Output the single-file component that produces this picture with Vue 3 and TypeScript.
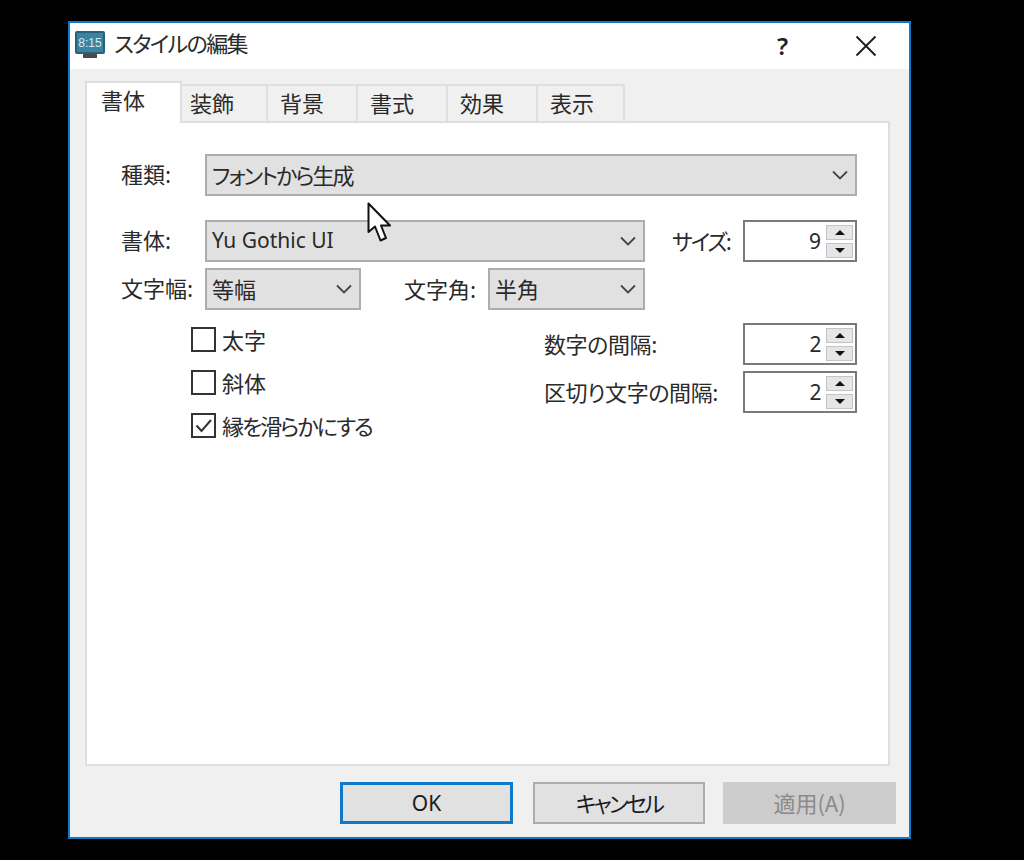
<template>
  <div class="screen">
    <div class="dialog">
      <div class="titlebar">
        <div class="app-icon">
          <div class="app-screen"><span>8:15</span></div>
          <div class="app-stand"></div>
        </div>
        <div class="title">スタイルの編集</div>
        <div class="help">?</div>
        <svg class="close" width="22" height="22" viewBox="0 0 22 22">
          <path d="M1.5 1.5 L20.5 20.5 M20.5 1.5 L1.5 20.5" stroke="#1a1a1a" stroke-width="1.8" fill="none" />
        </svg>
      </div>

      <div class="body">
        <div class="tabs">
          <div
            v-for="(tab, i) in tabs"
            :key="tab"
            class="tab"
            :class="{ active: i === 0 }"
          >{{ tab }}</div>
        </div>

        <div class="panel">
          <div class="row">
            <label class="lbl lbl-first">種類:</label>
            <div class="combo grow">
              <span class="tight">フォントから生成</span>
              <svg class="chev" width="16" height="10" viewBox="0 0 16 10"><path d="M1 1.5 L8 8.5 L15 1.5" /></svg>
            </div>
          </div>

          <div class="row row-font">
            <label class="lbl lbl-first">書体:</label>
            <div class="combo w-font">
              <span class="latin">Yu Gothic UI</span>
              <svg class="chev" width="16" height="10" viewBox="0 0 16 10"><path d="M1 1.5 L8 8.5 L15 1.5" /></svg>
            </div>
            <label class="lbl lbl-size tight">サイズ:</label>
            <div class="spin">
              <span class="val">9</span>
              <div class="spin-btns"><i class="up"></i><i class="down"></i></div>
            </div>
          </div>

          <div class="row row-width">
            <label class="lbl lbl-first">文字幅:</label>
            <div class="combo w-width">
              <span>等幅</span>
              <svg class="chev" width="16" height="10" viewBox="0 0 16 10"><path d="M1 1.5 L8 8.5 L15 1.5" /></svg>
            </div>
            <label class="lbl lbl-angle">文字角:</label>
            <div class="combo w-angle">
              <span>半角</span>
              <svg class="chev" width="16" height="10" viewBox="0 0 16 10"><path d="M1 1.5 L8 8.5 L15 1.5" /></svg>
            </div>
          </div>

          <div class="options">
            <div class="checks">
              <div v-for="c in checks" :key="c.label" class="check">
                <span class="box">
                  <svg v-if="c.on" width="21" height="21" viewBox="0 0 21 21"><path d="M3.5 10.5 L8.5 16 L18 5" /></svg>
                </span>
                <span>{{ c.label }}</span>
              </div>
            </div>
            <div class="spacing">
              <div v-for="s in spacings" :key="s.label" class="space-row">
                <label class="lbl">{{ s.label }}</label>
                <div class="spin">
                  <span class="val">{{ s.value }}</span>
                  <div class="spin-btns"><i class="up"></i><i class="down"></i></div>
                </div>
              </div>
            </div>
          </div>
        </div>

        <div class="actions">
          <div class="btn primary">OK</div>
          <div class="btn cancel">キャンセル</div>
          <div class="btn disabled">適用(A)</div>
        </div>
      </div>
    </div>

    <svg class="cursor" width="26" height="42" viewBox="0 0 26 42">
      <path d="M1.5 1.5 L1.5 30 L8 24.5 L13.5 38.5 L19 36 L14 23.5 L23 23.5 Z" fill="#fff" stroke="#111" stroke-width="2" stroke-linejoin="round" />
    </svg>
  </div>
</template>

<script setup lang="ts">
const tabs: string[] = ['書体', '装飾', '背景', '書式', '効果', '表示'];

const checks: { label: string; on: boolean }[] = [
  { label: '太字', on: false },
  { label: '斜体', on: false },
  { label: '縁を滑らかにする', on: true },
];

const spacings: { label: string; value: number }[] = [
  { label: '数字の間隔:', value: 2 },
  { label: '区切り文字の間隔:', value: 2 },
];
</script>

<style>
html,
body {
  margin: 0;
  background: #000;
}
</style>

<style scoped>
.screen {
  position: relative;
  width: 1024px;
  height: 860px;
  background: #000;
  padding: 21px 0 0 68px;
  box-sizing: border-box;
  overflow: hidden;
  font-family: "Noto Sans CJK JP", "Noto Sans", sans-serif;
  font-feature-settings: "palt";
  font-size: 22px;
  color: #2a2a2a;
}

.tight {
  letter-spacing: -2px;
}

.dialog {
  width: 843px;
  height: 818px;
  box-sizing: border-box;
  border: 2px solid #0f78c8;
  background: #f0f0f0;
  display: flex;
  flex-direction: column;
}

.titlebar {
  height: 46px;
  flex: none;
  background: #fff;
  display: flex;
  align-items: center;
  padding-left: 5px;
}

.app-icon {
  width: 30px;
  height: 27px;
  margin-top: -3px;
  flex: none;
  display: flex;
  flex-direction: column;
  align-items: center;
}

.app-screen {
  width: 30px;
  height: 23px;
  box-sizing: border-box;
  background: #3a84a0;
  border: 2px solid #2a6078;
  border-radius: 2px;
  display: flex;
  align-items: center;
  justify-content: center;
  overflow: hidden;
}

.app-screen span {
  font-family: "Liberation Sans", sans-serif;
  font-feature-settings: normal;
  font-size: 12px;
  line-height: 1;
  color: #d6e8ef;
}

.app-stand {
  width: 14px;
  height: 4px;
  background: #4a4a4a;
}

.title {
  margin-left: 9px;
  line-height: 28px;
  margin-top: -9px;
  letter-spacing: -1.6px;
}

.help {
  margin-left: auto;
  font-family: "Noto Sans", sans-serif;
  font-weight: 600;
  font-size: 24px;
  color: #222;
  margin-top: -2px;
}

.close {
  margin: 0 32px 0 67px;
  flex: none;
}

.body {
  flex: 1;
  display: flex;
  flex-direction: column;
  padding: 12px 13px 0 15px;
  min-height: 0;
}

.tabs {
  display: flex;
  align-items: flex-end;
  height: 42px;
  flex: none;
  margin-bottom: -2px;
  position: relative;
  z-index: 1;
}

.tab {
  width: 90px;
  height: 39px;
  box-sizing: border-box;
  border: 2px solid #dedede;
  border-left: 0;
  background: #f0f0f0;
  padding-left: 12px;
  line-height: 33px;
}

.tab:nth-child(2) {
  width: 86px;
  padding-left: 8px;
}

.tab:last-child {
  width: 87px;
}

.tab.active {
  width: 97px;
  height: 42px;
  border: 2px solid #dedede;
  border-bottom: 0;
  background: #fff;
  padding-left: 14px;
  line-height: 33px;
}

.panel {
  height: 645px;
  flex: none;
  width: 805px;
  box-sizing: border-box;
  background: #fff;
  border: 2px solid #dedede;
  padding: 31px 31px 0 33px;
}

.row {
  display: flex;
  align-items: center;
  height: 42px;
}

.row-font {
  margin-top: 24px;
}

.row-width {
  margin-top: 6px;
}

.lbl {
  white-space: nowrap;
  line-height: 28px;
  margin-top: -3px;
}

.lbl-first {
  width: 84px;
  flex: none;
  margin-left: 1px;
  margin-top: -4px;
}

.grow {
  flex: 1;
}

.combo {
  height: 42px;
  box-sizing: border-box;
  background: #e1e1e1;
  border: 2px solid #adadad;
  display: flex;
  align-items: center;
  justify-content: space-between;
  padding: 0 7px 0 5px;
}

.combo span {
  line-height: 28px;
  margin-top: -2px;
}

.latin {
  font-family: "Noto Sans", sans-serif;
  font-size: 21px;
}

.chev path {
  fill: none;
  stroke: #444;
  stroke-width: 1.8;
}

.w-font {
  width: 440px;
  flex: none;
}

.w-width {
  width: 156px;
  flex: none;
}

.w-angle {
  width: 157px;
  flex: none;
}

.lbl-size {
  margin-left: 27px;
  width: 71px;
  flex: none;
}

.lbl-angle {
  margin-left: 43px;
  width: 84px;
  flex: none;
}

.spin {
  width: 114px;
  height: 42px;
  flex: none;
  box-sizing: border-box;
  background: #fff;
  border: 2px solid #7a7a7a;
  display: flex;
  align-items: center;
  justify-content: flex-end;
  padding-right: 2px;
}

.val {
  font-family: "Noto Sans", sans-serif;
  font-size: 21px;
  line-height: 28px;
  margin-right: 5px;
}

.spin-btns {
  width: 27px;
  display: flex;
  flex-direction: column;
  gap: 3px;
}

.spin-btns i {
  height: 15px;
  box-sizing: border-box;
  background: #e6e6e6;
  border: 1px solid #c4c4c4;
  display: flex;
  align-items: center;
  justify-content: center;
}

.spin-btns i::before {
  content: "";
  width: 0;
  height: 0;
  border-left: 5px solid transparent;
  border-right: 5px solid transparent;
}

.spin-btns .up::before {
  border-bottom: 5px solid #111;
}

.spin-btns .down::before {
  border-top: 5px solid #111;
}

.options {
  display: flex;
  justify-content: space-between;
}

.checks {
  margin: 17px 0 0 71px;
  display: flex;
  flex-direction: column;
  gap: 19px;
}

.check {
  display: flex;
  align-items: center;
  height: 24px;
  gap: 6px;
}

.check:last-child {
  letter-spacing: -2px;
}

.box {
  width: 25px;
  height: 25px;
  box-sizing: border-box;
  border: 2px solid #333;
  background: #fff;
  display: block;
  flex: none;
}

.box svg {
  display: block;
}

.box path {
  fill: none;
  stroke: #333;
  stroke-width: 2;
}

.spacing {
  margin-top: 13px;
  display: flex;
  flex-direction: column;
  gap: 7px;
}

.space-row {
  display: flex;
  align-items: center;
  justify-content: space-between;
  width: 313px;
  letter-spacing: -0.4px;
}

.space-row + .space-row {
  margin-top: -1px;
}

.actions {
  display: flex;
  gap: 18px;
  justify-content: flex-end;
  margin-top: 16px;
}

.btn {
  width: 173px;
  height: 42px;
  box-sizing: border-box;
  background: #e1e1e1;
  border: 2px solid #adadad;
  padding-bottom: 3px;
  display: flex;
  align-items: center;
  justify-content: center;
  color: #1c1c1c;
}

.btn.primary {
  border: 3px solid #0f78c8;
  font-family: "Noto Sans", sans-serif;
  font-size: 21px;
  margin-right: 2px;
  padding-bottom: 0;
}

.btn.cancel {
  width: 172px;
  letter-spacing: -2.6px;
}

.btn.disabled {
  background: #cccccc;
  border-color: #cccccc;
  color: #8a8a8a;
}

.cursor {
  position: absolute;
  left: 367px;
  top: 202px;
}
</style>
